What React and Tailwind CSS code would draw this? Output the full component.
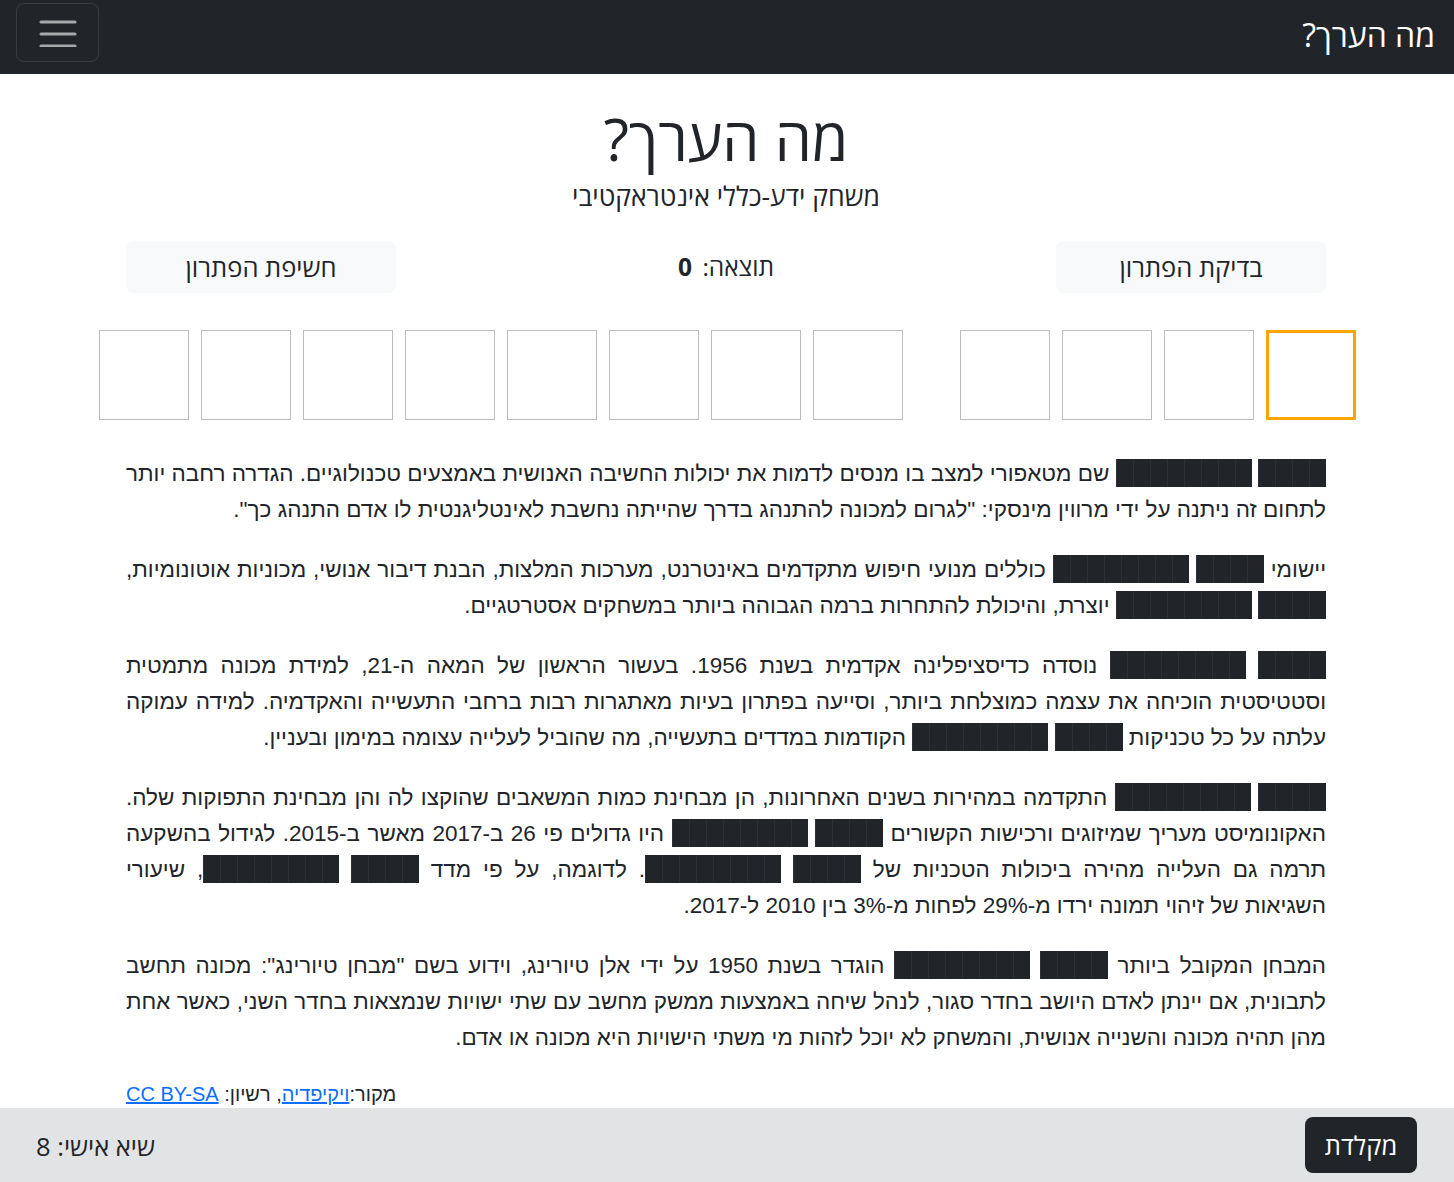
import React from "react";

const Hidden = ({ n }) => (
  <span className="inline-flex align-middle -mt-[4px]">
    {Array.from({ length: n }).map((_, i) => (
      <span
        key={i}
        className="inline-block w-[17px] h-[28px] bg-[#212529] border-l border-[#2c3035]"
      />
    ))}
  </span>
);

const AI = () => (
  <>
    <Hidden n={4} /> <Hidden n={8} />
  </>
);

const Box = ({ active }) => (
  <div
    className={
      active
        ? "w-[90px] h-[90px] border-[3px] border-[#ffa500] bg-white"
        : "w-[90px] h-[90px] border border-[#bdbdbd] bg-white"
    }
  />
);

const App = () => {
  return (
    <div
      dir="rtl"
      className="min-h-screen bg-white text-[#212529] font-['Open_Sans','Liberation_Sans',sans-serif]"
    >
      <nav className="h-[74px] bg-[#212529] flex justify-between items-start pr-[19px] pl-4">
        <span className="text-white text-[32px] leading-[70px]">מה הערך?</span>
        <button className="mt-[3px] w-[83px] h-[59px] border border-white/10 rounded-lg flex items-center justify-center">
          <svg width="38" height="28" viewBox="0 0 38 28">
            <path
              d="M2 3h34M2 15h34M2 27h34"
              stroke="#a7a8aa"
              strokeWidth="3"
              strokeLinecap="round"
            />
          </svg>
        </button>
      </nav>

      <div className="w-[1200px] mr-[128px]">
        <h1 className="text-center text-[59px] leading-[1.2] mt-[29px]">מה הערך?</h1>
        <p className="text-center text-[26.5px] leading-[1.2] mt-[7px]">
          משחק ידע-כללי אינטראקטיבי
        </p>

        <div className="flex justify-between items-center mt-[28px]">
          <button className="w-[270px] h-[52px] bg-[#f8f9fa] rounded-lg text-[25.5px] pt-[2px]">
            בדיקת הפתרון
          </button>
          <div className="text-[24.5px] pt-[2px]">
            תוצאה: <span className="font-bold mr-1">0</span>
          </div>
          <button className="w-[270px] h-[52px] bg-[#f8f9fa] rounded-lg text-[25.5px] pt-[2px]">
            חשיפת הפתרון
          </button>
        </div>
      </div>

      <div className="flex justify-center gap-[57px] mt-[37px] pl-[1px]">
        <div className="flex gap-[12px]">
          <Box active />
          <Box />
          <Box />
          <Box />
        </div>
        <div className="flex gap-[12px]">
          {Array.from({ length: 8 }).map((_, i) => (
            <Box key={i} />
          ))}
        </div>
      </div>

      <div className="w-[1200px] mr-[128px] mt-[36px] text-[22.5px] leading-[36px] text-justify font-['Liberation_Sans',sans-serif] text-[#212529]">
        <p className="mb-6">
          <AI /> שם מטאפורי למצב בו מנסים לדמות את יכולות החשיבה האנושית באמצעים
          טכנולוגיים. הגדרה רחבה יותר לתחום זה ניתנה על ידי מרווין מינסקי: "לגרום
          למכונה להתנהג בדרך שהייתה נחשבת לאינטליגנטית לו אדם התנהג כך".
        </p>
        <p className="mb-6">
          יישומי <AI /> כוללים מנועי חיפוש מתקדמים באינטרנט, מערכות המלצות, הבנת
          דיבור אנושי, מכוניות אוטונומיות, <AI /> יוצרת, והיכולת להתחרות ברמה
          הגבוהה ביותר במשחקים אסטרטגיים.
        </p>
        <p className="mb-6">
          <AI /> נוסדה כדיסציפלינה אקדמית בשנת 1956. בעשור הראשון של המאה ה-21,
          למידת מכונה מתמטית וסטטיסטית הוכיחה את עצמה כמוצלחת ביותר, וסייעה בפתרון
          בעיות מאתגרות רבות ברחבי התעשייה והאקדמיה. למידה עמוקה עלתה על כל
          טכניקות <AI /> הקודמות במדדים בתעשייה, מה שהוביל לעלייה עצומה במימון
          ובעניין.
        </p>
        <p className="mb-6">
          <AI /> התקדמה במהירות בשנים האחרונות, הן מבחינת כמות המשאבים שהוקצו לה
          והן מבחינת התפוקות שלה. האקונומיסט מעריך שמיזוגים ורכישות הקשורים{" "}
          <AI /> היו גדולים פי 26 ב-2017 מאשר ב-2015. לגידול בהשקעה תרמה גם
          העלייה מהירה ביכולות הטכניות של <AI />. לדוגמה, על פי מדד <AI />,
          שיעורי השגיאות של זיהוי תמונה ירדו מ-29% לפחות מ-3% בין 2010 ל-2017.
        </p>
        <p className="mb-6 text-[22.4px]">
          המבחן המקובל ביותר <AI /> הוגדר בשנת 1950 על ידי אלן טיורינג, וידוע בשם
          "מבחן טיורינג": מכונה תחשב לתבונית, אם יינתן לאדם היושב בחדר סגור, לנהל
          שיחה באמצעות ממשק מחשב עם שתי ישויות שנמצאות בחדר השני, כאשר אחת מהן
          תהיה מכונה והשנייה אנושית, והמשחק לא יוכל לזהות מי משתי הישויות היא
          מכונה או אדם.
        </p>
        <div className="text-left text-[20px] leading-[28px] mt-[2px]">
          <span dir="rtl">
            מקור:
            <a href="#" className="text-[#0d6efd] underline">
              ויקיפדיה
            </a>
            , רשיון:{" "}
            <a href="#" className="text-[#0d6efd] underline">
              CC BY-SA
            </a>
          </span>
        </div>
      </div>

      <footer className="h-[74px] bg-[#e2e3e5] flex justify-between items-center pr-[37px] pl-[36px]">
        <button className="w-[112px] h-[56px] bg-[#212529] text-white rounded-lg text-[25.5px] mt-[1px]">
          מקלדת
        </button>
        <span className="text-[25.5px] mt-[3px]">שיא אישי: 8</span>
      </footer>
    </div>
  );
};

export default App;
